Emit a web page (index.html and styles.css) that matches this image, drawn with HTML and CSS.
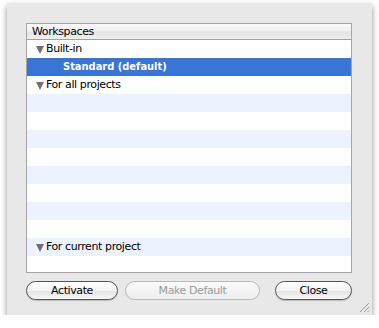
FILE: index.html
```html
<!DOCTYPE html>
<html lang="en">
<head>
  <meta charset="UTF-8">
  <title>Workspaces</title>
  <link rel="stylesheet" href="styles.css">
</head>
<body>
  <div class="window">
    <div class="list">
      <div class="list-head">Workspaces</div>
      <div class="rows">
        <div class="row group"><span class="tri"></span>Built-in</div>
        <div class="row item selected">Standard (default)</div>
        <div class="row group"><span class="tri"></span>For all projects</div>
        <div class="row"></div>
        <div class="row"></div>
        <div class="row"></div>
        <div class="row"></div>
        <div class="row"></div>
        <div class="row"></div>
        <div class="row"></div>
        <div class="row"></div>
        <div class="row group"><span class="tri"></span>For current project</div>
        <div class="row"></div>
      </div>
    </div>
    <div class="buttons">
      <button class="btn btn-activate">Activate</button>
      <button class="btn btn-default" disabled>Make Default</button>
      <button class="btn btn-close">Close</button>
    </div>
    <svg class="grip" width="11" height="11" viewBox="0 0 11 11">
      <path d="M1 10 L10 1 M5 10 L10 5 M8.5 10 L10 8.5" stroke="#9a9a9a" stroke-width="1"/>
    </svg>
  </div>
</body>
</html>
```

FILE: styles.css
```css
body { margin: 0; background: #fff; font-family: "DejaVu Sans", Verdana, sans-serif; font-size: 11px; letter-spacing: -0.4px; }
.window { position: relative; margin: 3px 0 0 7px; width: 365px; height: 312px; box-sizing: border-box; background: #e8e8e8; padding: 20px 20px 0 19px; box-shadow: 0 3px 6px rgba(0,0,0,0.45); }
.list { border: 1px solid #a5a5a5; background: #fff; height: 248px; overflow: hidden; }
.list-head { height: 15px; line-height: 15px; padding-left: 5px; border-bottom: 1px solid #a0a0a0; background: linear-gradient(#fafafa, #f0f0f0 45%, #e4e4e4 55%, #efefef); color: #000; }
.rows { display: flex; flex-direction: column; }
.row { height: 18px; line-height: 18px; color: #000; }
.row:nth-child(even) { background: #edf3fe; }
.row.group { padding-left: 9px; display: flex; align-items: center; }
.row.item { padding-left: 36px; }
.row.selected { background: #3875d7; color: #fff; font-family: "DejaVu Sans Condensed", "DejaVu Sans", sans-serif; font-weight: bold; letter-spacing: 0; }
.tri { width: 0; height: 0; border-left: 4.5px solid transparent; border-right: 4.5px solid transparent; border-top: 8px solid #707070; margin-right: 2px; margin-top: 1px; }
.buttons { display: flex; margin-top: 8px; }
.btn { height: 19px; padding: 0; border: 1px solid #555; border-radius: 10px; background: linear-gradient(#ffffff, #f3f3f3 50%, #e4e4e4 55%, #f6f6f6); font-family: inherit; font-size: 11px; letter-spacing: inherit; color: #000; box-shadow: 0 1px 1px rgba(0,0,0,0.2); }
.btn-activate { width: 92px; }
.btn-default { width: 135px; margin-left: 7px; }
.btn-close { width: 77px; margin-left: auto; }
.btn:disabled { border-color: #b8b8b8; color: #9a9a9a; box-shadow: none; background: linear-gradient(#fafafa, #eeeeee); }
.grip { position: absolute; right: 2px; bottom: 2px; }
```
